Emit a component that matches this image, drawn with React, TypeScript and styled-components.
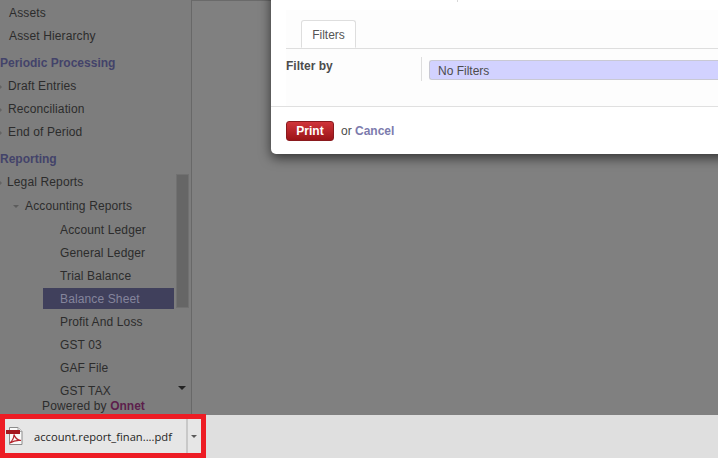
import React from "react";
import styled, { createGlobalStyle } from "styled-components";

const GlobalStyle = createGlobalStyle`
    html, body {
        margin: 0;
        padding: 0;
        overflow: hidden;
    }
    body {
        font-family: "Liberation Sans", Arial, sans-serif;
        font-size: 12px;
    }
`;

const Page = styled.div`
    position: relative;
    width: 718px;
    height: 458px;
    overflow: hidden;
    display: flex;
    flex-direction: column;
`;

const Workspace = styled.div`
    flex: 1;
    min-height: 0;
    display: flex;
    background: #808080;
`;

const Sidebar = styled.aside`
    position: relative;
    width: 191px;
    display: flex;
    flex-direction: column;
    background: #7d7d7d;
    border-right: 1px solid #686868;
`;

const Menu = styled.nav`
    flex: 1;
    min-height: 0;
    overflow: hidden;
    padding-top: 2px;
`;

const Heading = styled.div`
    height: 23px;
    padding-top: 4px;
    line-height: 23px;
    font-weight: bold;
    color: #43436a;
`;

const Row = styled.div<{ $indent: number; $tall?: boolean; $active?: boolean }>`
    height: ${(p) => (p.$active ? 21 : p.$tall ? 24 : 23)}px;
    margin-bottom: ${(p) => (p.$active ? 2 : 0)}px;
    line-height: 23px;
    letter-spacing: 0.13px;
    margin-left: ${(p) => (p.$active ? 43 : 0)}px;
    width: ${(p) => (p.$active ? 131 : 174)}px;
    padding-left: ${(p) => (p.$active ? p.$indent - 43 : p.$indent)}px;
    box-sizing: border-box;
    position: relative;
    white-space: nowrap;
    color: ${(p) => (p.$active ? "#85859c" : "#2c2c2c")};
    background: ${(p) => (p.$active ? "#40405c" : "transparent")};
`;

const Caret = styled.span<{ $left: number; $open?: boolean }>`
    position: absolute;
    left: ${(p) => p.$left}px;
    top: 10px;
    width: 0;
    height: 0;
    border-style: solid;
    border-color: transparent;
    ${(p) =>
        p.$open
            ? `border-width: 3px 3px 0 3px; border-top-color: #5c5c5c;`
            : `border-width: 2px 0 2px 2px; border-left-color: #636363;`}
`;

const Scrollbar = styled.div`
    position: absolute;
    left: 176px;
    top: 174px;
    width: 13px;
    height: 134px;
    background: #666666;
    border: 1px solid #717171;
    box-sizing: border-box;
`;

const ScrollArrow = styled.span`
    position: absolute;
    left: 178px;
    top: 386px;
    width: 0;
    height: 0;
    border-style: solid;
    border-color: #222222 transparent transparent transparent;
    border-width: 4px 4px 0 4px;
`;

const Powered = styled.div`
    height: 17px;
    line-height: 17px;
    padding-left: 42px;
    color: #2c2c2c;
    letter-spacing: 0.13px;
`;

const Brand = styled.span`
    font-weight: bold;
    letter-spacing: 0;
    color: #5c1f4c;
`;

const Content = styled.main`
    flex: 1;
    border-top: 1px solid #6a6a6a;
`;

const Dialog = styled.section`
    position: absolute;
    left: 271px;
    top: -20px;
    width: 480px;
    height: 174px;
    box-sizing: border-box;
    padding-top: 30px;
    display: flex;
    flex-direction: column;
    background: #ffffff;
    border-radius: 5px;
    box-shadow: 0 4px 12px rgba(0, 0, 0, 0.6);
    color: #4c4c4c;
`;

const HeaderTick = styled.span`
    position: absolute;
    left: 186px;
    top: 20px;
    width: 1px;
    height: 2px;
    background: #d8d8d8;
`;

const Body = styled.div`
    margin-left: 15px;
    padding-top: 10px;
    height: 86px;
    flex: none;
    background: #fdfdfd;
`;

const Tabs = styled.div`
    height: 28px;
    padding-left: 15px;
    border-bottom: 1px solid #dedede;
    display: flex;
`;

const Tab = styled.div`
    width: 55px;
    height: 28px;
    box-sizing: border-box;
    text-align: center;
    line-height: 28px;
    background: #ffffff;
    border: 1px solid #dedede;
    border-bottom-color: #ffffff;
    border-radius: 3px 3px 0 0;
    color: #555555;
`;

const FilterRow = styled.div`
    display: grid;
    grid-template-columns: 135px 8px 1fr;
    height: 24px;
    margin-top: 8px;
`;

const FilterLabel = styled.label`
    font-weight: bold;
    line-height: 18px;
    color: #4c4c4c;
`;

const FilterRule = styled.div`
    border-left: 1px solid #dedede;
`;

const FilterValue = styled.div`
    margin-top: 3px;
    height: 20px;
    box-sizing: border-box;
    padding-left: 8px;
    line-height: 20px;
    background: #d2d2ff;
    border: 1px solid #c9c9d4;
    border-right: 0;
    border-radius: 3px 0 0 3px;
    color: #4c4c4c;
`;

const Actions = styled.div`
    flex: 1;
    border-top: 1px solid #e0e0e0;
    padding: 14px 0 0 15px;
    display: flex;
    align-items: flex-start;
    gap: 7px;
    line-height: 20px;
`;

const PrintButton = styled.button`
    width: 48px;
    height: 20px;
    padding: 0;
    font: bold 12px "Liberation Sans", Arial, sans-serif;
    color: #ffffff;
    background: linear-gradient(#d0353a, #9b1418);
    border: 1px solid #8a1a1e;
    border-radius: 3px;
`;

const Cancel = styled.a`
    font-weight: bold;
    color: #7c7bad;
`;

const DownloadBar = styled.footer`
    height: 43px;
    flex: none;
    background: #dfdfdf;
    display: flex;
`;

const Highlight = styled.div`
    position: relative;
    width: 206px;
    height: 44px;
    margin-top: -1px;
    box-sizing: border-box;
    border: 5px solid #ed1c24;
    background: #e6e6e6;
    display: flex;
    align-items: center;
`;

const FileChip = styled.div`
    width: 183px;
    height: 100%;
    display: flex;
    align-items: center;
    gap: 11px;
    padding-left: 1px;
    box-sizing: border-box;
    border-right: 2px solid #c8c8c8;
`;

const FileName = styled.span`
    font-family: "Open Sans", "Noto Sans", sans-serif;
    font-size: 11.2px;
    color: #1f1f1f;
    white-space: nowrap;
`;

const ChipCaret = styled.span`
    margin-left: 3px;
    width: 0;
    height: 0;
    border-style: solid;
    border-color: #5a5a5a transparent transparent transparent;
    border-width: 3px 3px 0 3px;
`;

const PdfIcon: React.FC = () => (
    <svg width="17" height="18" viewBox="0 0 17 18">
        <path d="M3.5 .5H12L16 4.500V17.500H3.500Z" fill="#fafafa" stroke="#8b8b8b" />
        <path d="M12 .5V4.500H16" fill="#e4e4e4" stroke="#a5a5a5" />
        <rect x="0" y="3" width="14" height="4" fill="#a5161e" />
        <path d="M4 16C7 13 8 9 8 7.500C9 11 11 13 15 13.500C11 13 7 14 4 16Z" fill="none" stroke="#b5222a" strokeWidth="1.200" />
    </svg>
);

type Item = { label: string; indent: number; tall?: boolean; caret?: number; open?: boolean; active?: boolean };

const topItems: Item[] = [
    { label: "Assets", indent: 9 },
    { label: "Asset Hierarchy", indent: 9 },
];
const periodicItems: Item[] = [
    { label: "Draft Entries", indent: 8, caret: 0 },
    { label: "Reconciliation", indent: 8, caret: 0 },
    { label: "End of Period", indent: 8, caret: 0 },
];
const reportingItems: Item[] = [
    { label: "Legal Reports", indent: 7, caret: 0, tall: true },
    { label: "Accounting Reports", indent: 25, caret: 13, open: true, tall: true },
    { label: "Account Ledger", indent: 60 },
    { label: "General Ledger", indent: 60 },
    { label: "Trial Balance", indent: 60 },
    { label: "Balance Sheet", indent: 60, active: true },
    { label: "Profit And Loss", indent: 60 },
    { label: "GST 03", indent: 60 },
    { label: "GAF File", indent: 60 },
    { label: "GST TAX", indent: 60 },
];

const renderItems = (items: Item[]) =>
    items.map((item) => (
        <Row key={item.label} $indent={item.indent} $tall={item.tall} $active={item.active}>
            {item.caret !== undefined && <Caret $left={item.caret} $open={item.open} />}
            {item.label}
        </Row>
    ));

const App: React.FC = () => {
    return (
        <>
            <GlobalStyle />
            <Page>
                <Workspace>
                    <Sidebar>
                        <Menu>
                            {renderItems(topItems)}
                            <Heading>Periodic Processing</Heading>
                            {renderItems(periodicItems)}
                            <Heading>Reporting</Heading>
                            {renderItems(reportingItems)}
                        </Menu>
                        <Powered>
                            Powered by <Brand>Onnet</Brand>
                        </Powered>
                        <Scrollbar />
                        <ScrollArrow />
                    </Sidebar>
                    <Content />
                </Workspace>
                <Dialog>
                    <HeaderTick />
                    <Body>
                        <Tabs>
                            <Tab>Filters</Tab>
                        </Tabs>
                        <FilterRow>
                            <FilterLabel>Filter by</FilterLabel>
                            <FilterRule />
                            <FilterValue>No Filters</FilterValue>
                        </FilterRow>
                    </Body>
                    <Actions>
                        <PrintButton>Print</PrintButton>
                        <span>
                            or <Cancel>Cancel</Cancel>
                        </span>
                    </Actions>
                </Dialog>
                <DownloadBar>
                    <Highlight>
                        <FileChip>
                            <PdfIcon />
                            <FileName>account.report_finan....pdf</FileName>
                        </FileChip>
                        <ChipCaret />
                    </Highlight>
                </DownloadBar>
            </Page>
        </>
    );
};

export default App;
